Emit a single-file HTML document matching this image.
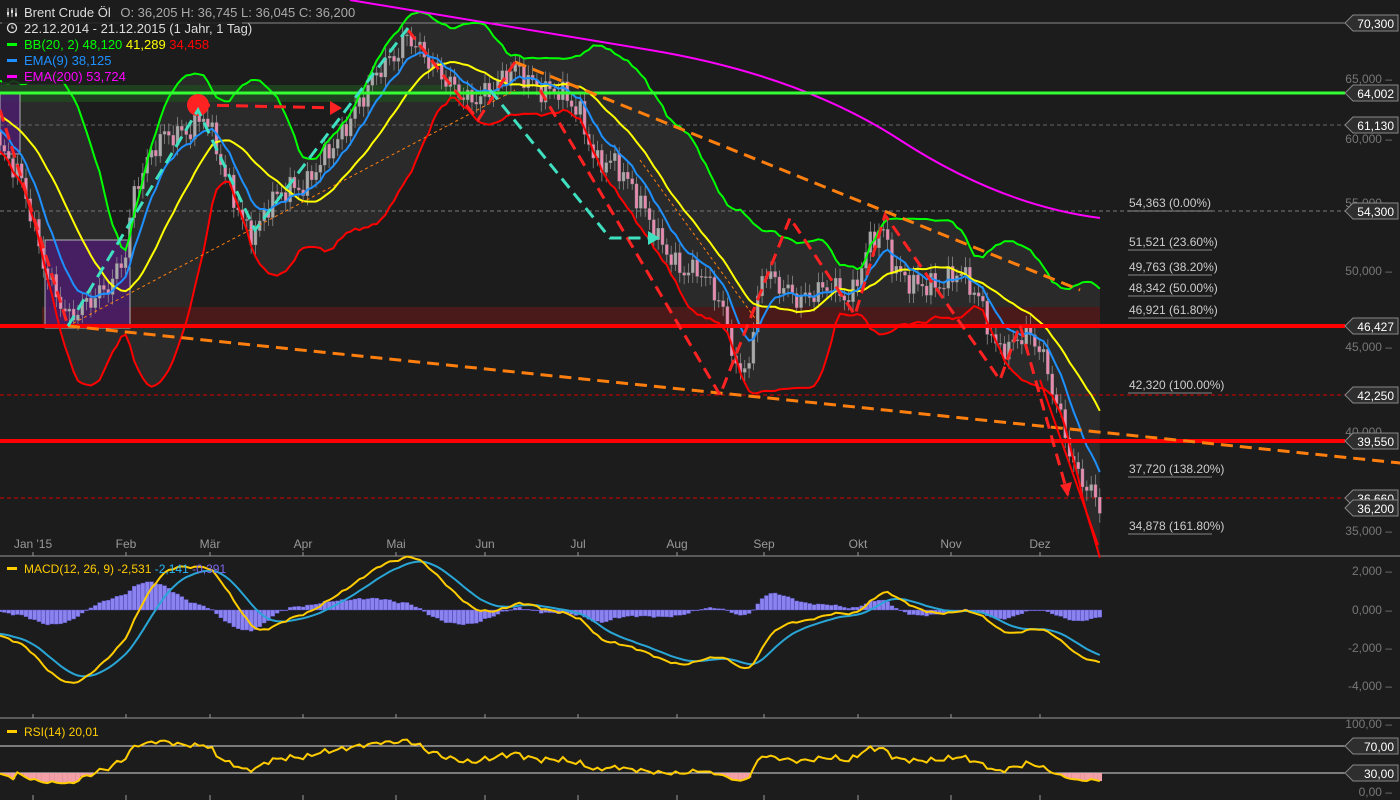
<!DOCTYPE html>
<html><head><meta charset="utf-8"><style>
html,body{margin:0;padding:0;background:#1c1c1c;width:1400px;height:800px;overflow:hidden}
svg{display:block;font-family:"Liberation Sans",sans-serif}
</style></head><body>
<svg id="s" width="1400" height="800" xmlns="http://www.w3.org/2000/svg">
<rect width="1400" height="800" fill="#1c1c1c"/>
<g id="bg"></g>
<g id="main"></g>
<g id="fg">
<rect x="2" y="3" width="345" height="17" fill="#1c1c1c" opacity="0.85"/>
<rect x="2" y="20" width="240" height="16" fill="#1c1c1c" opacity="0.85"/>
<rect x="2" y="36" width="210" height="16" fill="#1c1c1c" opacity="0.85"/>
<rect x="2" y="52" width="105" height="16" fill="#1c1c1c" opacity="0.85"/>
<rect x="2" y="68" width="124" height="16" fill="#1c1c1c" opacity="0.85"/>
<text x="24" y="17" fill="#ddd" font-size="13">Brent Crude Öl <tspan fill="#aaa" dx="6">O: 36,205  H: 36,745  L: 36,045  C: 36,200</tspan></text>
<path d="M8 8v9M12 8v9M16 8v9" stroke="#ddd" stroke-width="1"/><rect x="7" y="12" width="2" height="3" fill="#ddd"/><rect x="11" y="10" width="2" height="3" fill="#ddd"/><rect x="15" y="13" width="2" height="3" fill="#ddd"/>
<circle cx="12" cy="28" r="4.5" fill="none" stroke="#ddd" stroke-width="1.3"/><path d="M12 25.5V28h2" stroke="#ddd" fill="none"/>
<text x="24" y="33" fill="#ddd" font-size="13">22.12.2014 - 21.12.2015 (1 Jahr, 1 Tag)</text>
<rect x="7" y="43" width="10" height="3" fill="#0f0"/><text x="24" y="49" font-size="13" fill="#0f0">BB(20, 2)  48,120 <tspan fill="#ff0">41,289</tspan> <tspan fill="#f00">34,458</tspan></text>
<rect x="7" y="59" width="10" height="3" fill="#1e90ff"/><text x="24" y="65" font-size="13" fill="#1e90ff">EMA(9)  38,125</text>
<rect x="7" y="75" width="10" height="3" fill="#f0f"/><text x="24" y="81" font-size="13" fill="#f0f">EMA(200)  53,724</text>
<rect x="7" y="567" width="10" height="3" fill="#fc0"/><text x="24" y="573" font-size="12" fill="#fc0">MACD(12, 26, 9)  -2,531  <tspan fill="#29b6f6">-2,141</tspan>  <tspan fill="#7b68ee">-0,391</tspan></text>
<rect x="7" y="730" width="10" height="3" fill="#fc0"/><text x="24" y="736" font-size="12" fill="#fc0">RSI(14)  20,01</text>
</g>
<script><![CDATA[
const L=Math.log,Y=p=>79+(L(65)-L(p))*730;
const bg=document.getElementById('bg'),mg=document.getElementById('main'),fg=document.getElementById('fg');
function add(g,h){g.insertAdjacentHTML('beforeend',h);}
const months=[["Jan '15",33],["Feb",126],["Mär",210],["Apr",303],["Mai",396],["Jun",485],["Jul",578],["Aug",677],["Sep",764],["Okt",858],["Nov",951],["Dez",1040]];
const keys=[[0,59],[20,57],[45,50],[68,46.8],[90,48],[110,49],[125,51],[135,56],[160,60],[190,60.5],[205,62],[225,57],[245,53],[255,52.5],[270,55],[290,56],[305,56],[320,58],[340,60],[360,63],[380,66],[395,67],[408,69],[425,67],[445,65],[470,63],[490,64],[515,66],[540,64],[560,64],[580,62],[595,58],[615,58],[640,55],[660,52],[680,50],[700,50],[720,48],[740,43],[752,45],[762,50],[780,49],[800,48],[830,49],[850,48],[870,52],[882,53],[895,50],[915,49],[940,49],[960,50],[980,48],[995,45],[1010,45],[1025,46],[1040,45],[1055,42],[1065,40],[1075,38],[1090,37],[1100,36.2]];
function interp(x){for(let i=1;i<keys.length;i++){if(x<=keys[i][0]){const a=keys[i-1],b=keys[i];return a[1]+(b[1]-a[1])*(x-a[0])/(b[0]-a[0]);}}return 36.2;}
const D=4.33,N=255,PRE=40;
let cl=[],xs=[];
for(let i=0;i<PRE;i++){cl.push(68-(8*i/PRE)+Math.sin(i*1.3)*0.6);xs.push(-(PRE-i)*D);}
for(let i=0;i<N;i++){const x=i*D;xs.push(x);cl.push(interp(x)*(1+0.011*Math.sin(i*1.7)+0.007*Math.sin(i*3.1+1)));}
function ema(a,n){const k=2/(n+1);let r=[a[0]];for(let i=1;i<a.length;i++)r.push(a[i]*k+r[i-1]*(1-k));return r;}
let mid=[],up=[],lo=[];
for(let i=0;i<cl.length;i++){const s=cl.slice(Math.max(0,i-19),i+1);const m=s.reduce((a,b)=>a+b)/s.length;const sd=Math.sqrt(s.reduce((a,b)=>a+(b-m)*(b-m),0)/s.length);mid.push(m);up.push(m+2*sd+0.4);lo.push(m-2*sd-0.4);}
const e9=ema(cl,9);
function path(arr,f){let d='';for(let i=PRE;i<arr.length;i++){d+=(i==PRE?'M':'L')+xs[i].toFixed(1)+' '+f(arr[i]).toFixed(1);}return d;}
let bd='';for(let i=PRE;i<cl.length;i++)bd+=(i==PRE?'M':'L')+xs[i].toFixed(1)+' '+Y(up[i]).toFixed(1);
for(let i=cl.length-1;i>=PRE;i--)bd+='L'+xs[i].toFixed(1)+' '+Y(lo[i]).toFixed(1);
add(bg,`<path d="${bd}Z" fill="#2a2a2a"/>`);
add(bg,`<rect x="0" y="85" width="470" height="17" fill="#1f4a1f" opacity="0.8"/><rect x="42" y="307" width="1058" height="20" fill="#4a1a1a"/>`);
add(bg,`<rect x="45" y="240" width="85" height="88" fill="#4b1e6e" opacity="0.85" stroke="#ccc" stroke-width="1"/><rect x="0" y="92" width="20" height="62" fill="#4b1e6e" opacity="0.85" stroke="#ccc"/>`);
add(bg,`<line x1="0" y1="23" x2="1345" y2="23" stroke="#888" stroke-width="1"/>
<line x1="0" y1="125" x2="1345" y2="125" stroke="#666" stroke-dasharray="4,3"/>
<line x1="0" y1="211" x2="1345" y2="211" stroke="#777" stroke-dasharray="4,3"/>
<line x1="0" y1="395" x2="1345" y2="395" stroke="#d00" stroke-dasharray="4,3"/>
<line x1="0" y1="498" x2="1345" y2="498" stroke="#d00" stroke-dasharray="4,3"/>
<line x1="0" y1="556" x2="1400" y2="556" stroke="#999"/><line x1="0" y1="718" x2="1400" y2="718" stroke="#999"/>
<line x1="0" y1="746" x2="1345" y2="746" stroke="#ddd"/><line x1="0" y1="773" x2="1345" y2="773" stroke="#ddd"/>`);
let cs='';
for(let i=PRE;i<cl.length;i++){const o=cl[i-1],c=cl[i];const h=Math.max(o,c)*(1+0.008+0.006*Math.abs(Math.sin(i*2.3))),l=Math.min(o,c)*(1-0.008-0.006*Math.abs(Math.cos(i*1.9)));const x=xs[i];const col=c>=o?'#aaa':'#e88ab0';
cs+=`<line x1="${x}" y1="${Y(h)}" x2="${x}" y2="${Y(l)}" stroke="#999" stroke-width="0.7"/><rect x="${x-1.5}" y="${Math.min(Y(o),Y(c))}" width="3" height="${Math.max(1,Math.abs(Y(o)-Y(c)))}" fill="${col}" stroke="#888" stroke-width="0.4"/>`;}
add(mg,cs);
add(mg,`<path d="${path(up,Y)}" stroke="#0f0" stroke-width="2" fill="none"/><path d="${path(lo,Y)}" stroke="#f00" stroke-width="2" fill="none"/><path d="${path(mid,Y)}" stroke="#ff0" stroke-width="2" fill="none"/><path d="${path(e9,Y)}" stroke="#1e90ff" stroke-width="2" fill="none"/>`);
add(mg,`<path d="M350 0 Q500 25 650 50 T900 140 T1100 218" stroke="#f0f" stroke-width="2" fill="none"/>`);
add(mg,`<line x1="0" y1="93" x2="1345" y2="93" stroke="#3f3" stroke-width="3"/><line x1="0" y1="326" x2="1345" y2="326" stroke="#f00" stroke-width="4"/><line x1="0" y1="441" x2="1345" y2="441" stroke="#f00" stroke-width="4"/>`);
add(mg,`<line x1="68" y1="326" x2="1400" y2="463" stroke="#ff7f0e" stroke-width="3" stroke-dasharray="12,7"/><line x1="515" y1="62" x2="1080" y2="290" stroke="#ff7f0e" stroke-width="3" stroke-dasharray="12,7"/>
<line x1="68" y1="326" x2="515" y2="90" stroke="#ff7f0e" stroke-width="1" stroke-dasharray="3,3"/><line x1="640" y1="160" x2="760" y2="325" stroke="#ff7f0e" stroke-width="1" stroke-dasharray="3,3"/>`);
add(mg,`<path d="M0 110 L68 326 M198 105 L340 108 M408 30 L478 120 L515 62 M540 90 L720 395 L790 218 L855 315 L885 215 L1000 380 L1020 325 L1068 495" stroke="#f22" stroke-width="3" fill="none" stroke-dasharray="12,7"/>
<circle cx="198" cy="105" r="11" fill="#f22"/>
<path d="M68 326 L198 110 L255 230 L408 28 M490 90 L610 238 L650 238" stroke="#3fe0c0" stroke-width="3" fill="none" stroke-dasharray="12,7"/>
<path d="M1040 380 L1098 545" stroke="#f00" stroke-width="2"/>
<polygon points="330,101 342,108 330,115" fill="#f22"/><polygon points="648,231 660,238 648,245" fill="#3fe0c0"/><polygon points="1060,485 1068,497 1072,482" fill="#f22"/>`);
const fib=[[54.363,"54,363 (0.00%)",203],[51.521,"51,521 (23.60%)",242],[49.763,"49,763 (38.20%)",267],[48.342,"48,342 (50.00%)",288],[46.921,"46,921 (61.80%)",310],[42.32,"42,320 (100.00%)",385],[37.72,"37,720 (138.20%)",469],[34.878,"34,878 (161.80%)",526]];
let ft='';fib.forEach(f=>{ft+=`<text x="1129" y="${f[2]+4}" fill="#ccc" font-size="12">${f[1]}</text><line x1="1128" y1="${f[2]+8}" x2="1212" y2="${f[2]+8}" stroke="#aaa" stroke-width="0.8"/>`;});
add(fg,ft);
let ax='';[[65,79],[60,139],[55,203],[50,271],[45,347],[40,432],[35,531]].forEach(t=>{ax+=`<text x="1392" y="${t[1]+4}" fill="#777" font-size="12" text-anchor="end">${t[0]},000 –</text>`;});
[["2,000",571],["0,000",610],["-2,000",648],["-4,000",686],["100,00",724],["0,00",792]].forEach(t=>{ax+=`<text x="1392" y="${t[1]+4}" fill="#777" font-size="12" text-anchor="end">${t[0]} –</text>`;});
add(fg,ax);
function tag(y,t){return `<polygon points="1345,${y} 1353,${y-8} 1398,${y-8} 1398,${y+8} 1353,${y+8}" fill="#2e2e2e" stroke="#888"/><text x="1394" y="${y+5}" fill="#fff" font-size="12" text-anchor="end">${t}</text>`;}
add(fg,tag(23,"70,300")+tag(93,"64,002")+tag(125,"61,130")+tag(211,"54,300")+tag(326,"46,427")+tag(395,"42,250")+tag(441,"39,550")+tag(498,"36,660")+tag(508,"36,200")+tag(746,"70,00")+tag(773,"30,00"));
let mt='';months.forEach(m=>{mt+=`<text x="${m[1]}" y="548" fill="#999" font-size="12" text-anchor="middle">${m[0]}</text><line x1="${m[1]}" y1="552" x2="${m[1]}" y2="556" stroke="#999"/><line x1="${m[1]}" y1="714" x2="${m[1]}" y2="718" stroke="#999"/><line x1="${m[1]}" y1="795" x2="${m[1]}" y2="800" stroke="#999"/>`;});
add(fg,mt);
const e12=ema(cl,12),e26=ema(cl,26);let mc=cl.map((c,i)=>e12[i]-e26[i]);const sg=ema(mc,9);
const MY=v=>610-v*19;
let hb='';for(let i=PRE;i<cl.length;i++){const h=mc[i]-sg[i];const y0=610,y1=610-h*19*1.0;hb+=`<rect x="${xs[i]-2}" y="${Math.min(y0,y1)}" width="4" height="${Math.max(0.8,Math.abs(y1-y0))}" fill="#8a83f0" stroke="#5a52c0" stroke-width="0.4"/>`;}
add(mg,hb+`<path d="${path(sg,MY)}" stroke="#29a6d6" stroke-width="2" fill="none"/><path d="${path(mc,MY)}" stroke="#fc0" stroke-width="2" fill="none"/>`);
let rs=[50],ag=0,al=0;for(let i=1;i<cl.length;i++){const d=cl[i]-cl[i-1];ag=(ag*13+Math.max(d,0))/14;al=(al*13+Math.max(-d,0))/14;rs.push(al==0?70:100-100/(1+ag/al));}
const RY=v=>792-v*0.68;
let rf='';for(let i=PRE;i<cl.length;i++){if(rs[i]<30)rf+=`<rect x="${xs[i]-2.2}" y="773" width="4.4" height="${RY(rs[i])-773}" fill="#f4a0a8"/>`;}
add(mg,rf+`<path d="${path(rs,RY)}" stroke="#fc0" stroke-width="2" fill="none"/>`);
]]></script>
</svg>
</body></html>
